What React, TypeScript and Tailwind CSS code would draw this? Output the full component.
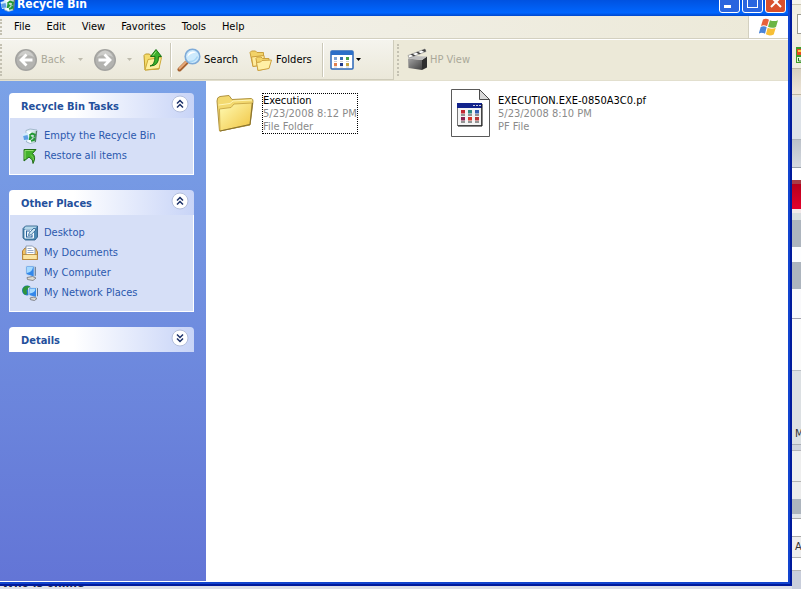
import type { ReactNode } from "react";

const MENUS = ["File", "Edit", "View", "Favorites", "Tools", "Help"];

// Slices of the browser page that shows to the right of the window
const PAGE_SLICES = [
  { className: "h-[4px] bg-[#f7f5ee]" },
  { className: "h-[10px] border-t border-[#c9c4b0] bg-[#f1eee2]" },
  { className: "h-[20px] bg-[#f3f0e6]", kind: "field" },
  { className: "h-[8px] bg-[#f1eee2]" },
  { className: "h-[26px] bg-[#efecdf]", kind: "badge" },
  { className: "h-[27px] border-y border-[#bdb6a3] bg-linear-to-b from-[#d8d1c0] to-[#efe6d9]" },
  { className: "h-[2px] bg-[#e8e4dc]" },
  { className: "h-[43px] border-b border-[#aeb4ba] bg-[#dde2e8]" },
  { className: "h-[28px] border-b border-[#9aa1aa] bg-linear-to-b from-[#bcc2ca] to-[#d5d9df]" },
  { className: "h-[12px] bg-white" },
  { className: "h-[29px] border-t-4 border-[#a83c46] bg-linear-to-b from-[#b8001c] to-[#e4002b]" },
  { className: "h-[4px] bg-[#f3e9ea]" },
  { className: "h-[7px] bg-[#d9dddf]" },
  { className: "h-[27px] bg-[#adb5be]" },
  { className: "h-[15px] bg-[#fcfdfe]" },
  { className: "h-[27px] bg-[#adb5be]" },
  { className: "h-[30px] border-b border-[#a5a5b0] bg-[#f9f9fb]" },
  { className: "h-[52px] border-b border-[#b9bec4] bg-[#fafafa]" },
  { className: "h-[52px] bg-[#dce0e3]" },
  { className: "h-[22px] border-b border-[#aaaeb4] bg-[#dce0e3]", letter: "M" },
  { className: "h-[6px] border-b border-[#b4b4ba] bg-[#d0d4dc]" },
  { className: "h-[31px] border-b border-[#b4b4b4] bg-[#eeeeee]" },
  { className: "h-[17px] bg-[#ebebeb]" },
  { className: "h-[15px] bg-[#adb5be]" },
  { className: "h-[5px] border-b border-[#aaaaaa] bg-[#e2e5e8]" },
  { className: "h-[18px] border-b border-[#aaaaaa] bg-white" },
  { className: "h-[21px] border-b border-[#b4b4b4] bg-[#eeeeee]", letter: "A" },
  { className: "h-[13px] border-b border-[#b4b4b4] bg-white" }
];

function RecycleIcon() {
  return (
    <svg viewBox="0 0 16 16" className="h-4 w-4 shrink-0">
      <path d="M4 2.5 8 1l7 1-1.5 12-5 1.5L4.5 14Z" fill="#dcebf3" stroke="#8ba6ba" strokeWidth=".7" />
      <path d="M4.5 3 10 4 9 15 5.5 13.5Z" fill="#f6fcff" />
      <path d="m10 4 4.500-1.500L13.200 14 9 15.200Z" fill="#c4dcd6" />
      <path d="M.5 6 6 4.500 7.500 12 2 13Z" fill="#d4ebfd" />
      <path d="M1.200 8 5.500 7l1 4.500-4.500.5Z" fill="#5d9ee4" />
      <path d="m7.500 7.500 2.500-2 3 1.200L12.500 9M12.500 9.500 12 12l-3 .8M7.800 12 8.200 8.800l2 1.200" fill="none" stroke="#219a33" strokeWidth="1.900" />
      <path d="M14.500 3 13.300 14" stroke="#4f7d62" strokeWidth="1.200" />
    </svg>
  );
}

function RestoreIcon() {
  return (
    <svg viewBox="0 0 16 16" className="h-4 w-4 shrink-0">
      <path d="M2 1.500h12L10.500 5.500q4 3.500.5 10Q11.500 11.500 7 9l-5 4Z" fill="#43b22d" stroke="#226c17" />
      <path d="M3 11V2.500h8.500" fill="none" stroke="#92df70" />
      <path d="M8.500 7q3.500 2 3 5" fill="none" stroke="#77cf57" />
    </svg>
  );
}

function DesktopIcon() {
  return (
    <svg viewBox="0 0 16 16" className="h-4 w-4 shrink-0">
      <path d="M1 3.500 3.500 1h12v11L13 15H3.500L1 13Z" fill="#4d88b3" stroke="#25577f" strokeWidth=".8" />
      <path d="M3.500 1.500H15L12.500 4H2Z" fill="#b4d7ea" />
      <rect x="2.500" y="4.500" width="9.500" height="9" rx="1" fill="#f5faff" />
      <path d="M8 6H4.500v6H10v-2.500" fill="none" stroke="#28619b" strokeWidth="1.100" />
      <path d="m6.500 10.500.7-2.500L12 3l2 1.800L9 9.800Z" fill="#d5eaf6" stroke="#20598c" strokeWidth=".8" />
    </svg>
  );
}

function DocumentsIcon() {
  return (
    <svg viewBox="0 0 16 16" className="h-4 w-4 shrink-0">
      <path d="M.5 6 3 3h10.500l2 4v7.500H.5Z" fill="#f2c260" stroke="#a8752a" strokeWidth=".9" />
      <path d="M4 1h6.500L13 3.500V11H4Z" fill="#fff" stroke="#788aa6" strokeWidth=".8" />
      <path d="M5.500 3.500h4M5.500 5.500h6M5.500 7.500h6" stroke="#9aacca" />
      <path d="M.7 9.500H15.300v5H.7Z" fill="#fbe5a2" stroke="#b4822f" strokeWidth=".8" />
    </svg>
  );
}

function ComputerIcon() {
  return (
    <svg viewBox="0 0 16 16" className="h-4 w-4 shrink-0">
      <path d="m11 1 3 1v8.500L12 12Z" fill="#7488a2" />
      <path d="M4 1h8.200v11L4 9.500Z" fill="#3387ea" stroke="#cbdaec" />
      <path d="M5 2h6q-.5 5-6 6Z" fill="#a5daff" />
      <path d="m5 12.500 5.500-1L14 13l-3 2.500-5.500-1Z" fill="#dddbd3" stroke="#73757b" strokeWidth=".8" />
    </svg>
  );
}

function NetworkIcon() {
  return (
    <svg viewBox="0 0 16 16" className="h-4 w-4 shrink-0">
      <circle cx="5" cy="5.500" r="5" fill="#2877cf" />
      <path d="M1 3Q4-.5 8 1.500L7 4 4.500 5 5 9 3 10Q-.5 7 1 3Z" fill="#2e953c" />
      <path d="m14 2.500 2 .8v7.500L14 12.500Z" fill="#62768f" />
      <path d="M6.500 3 14.500 2.500v10L7 10.500Z" fill="#3387ea" stroke="#d4e0ee" />
      <path d="m7.500 4 6-.5q-.5 4.500-6 5Z" fill="#a7dbff" />
      <path d="m8 13 4-1 3 1.500-2.500 2-4-.8Z" fill="#d9d8d2" stroke="#707278" strokeWidth=".8" />
    </svg>
  );
}

const TASKS = [
  { label: "Empty the Recycle Bin", icon: <RecycleIcon /> },
  { label: "Restore all items", icon: <RestoreIcon /> }
];

const PLACES = [
  { label: "Desktop", icon: <DesktopIcon /> },
  { label: "My Documents", icon: <DocumentsIcon /> },
  { label: "My Computer", icon: <ComputerIcon /> },
  { label: "My Network Places", icon: <NetworkIcon /> }
];

function ArrowCircle({ forward = false }: { forward?: boolean }) {
  return (
    <svg viewBox="0 0 24 24" className="h-6 w-6">
      <circle cx="12" cy="12" r="11" fill="#a3a3a0" />
      <circle cx="12" cy="12" r="9.500" fill="#b3b3b0" />
      <path d="M4 9q3-6.500 8-6.500T20 9Q12 5 4 9Z" fill="#cdcdca" />
      <path
        d={forward ? "M5.500 12H16M11.500 6.500 17 12l-5.500 5.500" : "M18.500 12H8M12.500 6.500 7 12l5.500 5.500"}
        fill="none"
        stroke="#fff"
        strokeWidth="2.800"
      />
    </svg>
  );
}

function UpFolderIcon() {
  return (
    <svg viewBox="0 0 22 24" className="h-6 w-[22px]">
      <path d="M2 7.500 3.500 6h4l1.500 2h8v13L3 22Z" fill="#f5dc6c" stroke="#bd9a2a" />
      <path d="m3 22 3-10.500 13.500-2L17 20.500Z" fill="#fff0a0" stroke="#cdaa3a" />
      <path d="M8 18q5-1 5-9.500H8.500L14 1.500l5.500 7h-3Q17 18 8 18Z" fill="#3db02c" stroke="#1b7516" />
      <path d="m14 3.500-3 4" stroke="#9be07c" />
    </svg>
  );
}

function SearchIcon() {
  return (
    <svg viewBox="0 0 24 24" className="h-6 w-6">
      <path d="m2.500 21.500 7-7" stroke="#a4602f" strokeWidth="4" strokeLinecap="round" />
      <path d="m2.500 20.500 6.500-6.500" stroke="#e7a878" strokeWidth="2" strokeLinecap="round" />
      <circle cx="15.500" cy="8.500" r="7.300" fill="#cdeafc" stroke="#7fabd8" strokeWidth="1.600" />
      <path d="M10.500 9q0-5 5.500-5.500 2 0 3 1Q13 5 10.500 9Z" fill="#fff" />
      <path d="M12 13.500q6 .5 8.500-5" fill="none" stroke="#a5d5f5" strokeWidth="1.500" />
    </svg>
  );
}

function FoldersIcon() {
  return (
    <svg viewBox="0 0 24 24" className="h-6 w-6">
      <path d="M1 4.500 2.500 3h4L8 4.500h6.500V16L4 18.500Z" fill="#f2d268" stroke="#c9a03e" />
      <path d="M4 18.500 2.500 9 15 7.500l1 9Z" fill="#ffeb9c" stroke="#ca9e3b" />
      <path d="M7 10.500 8.500 9H12l1.500 1.500H20V20L9 22.500Z" fill="#f4d56a" stroke="#c9a03e" />
      <path d="M9 22.500 7.500 14.500l4-.5 1.500-1.500 9.500-.5-2.500 8.500Z" fill="#fff0a5" stroke="#cea341" />
    </svg>
  );
}

function ViewsIcon() {
  return (
    <svg viewBox="0 0 24 20" className="h-5 w-6">
      <rect x="1" y="1" width="22" height="18" rx="1" fill="#fff" stroke="#2b67b8" strokeWidth="1.500" />
      <path d="M1 1h22v4H1Z" fill="#2c6fc8" />
      <path d="M4 7h3v3H4Z" fill="#7fa4d4" />
      <path d="M10 7h3v3h-3Z" fill="#3870b8" />
      <path d="M16 7h3v3h-3Z" fill="#49a043" />
      <path d="M4 13h3v3H4Z" fill="#e3804c" />
      <path d="M10 13h3v3h-3Z" fill="#203b8c" />
      <path d="M16 13h3v3h-3Z" fill="#c5a440" />
      <path d="M4 11.500h3M10 11.500h3M16 11.500h3M4 17h3M10 17h3M16 17h3" stroke="#b8b8b8" strokeWidth=".7" />
    </svg>
  );
}

function ClapperIcon() {
  return (
    <svg viewBox="0 0 22 24" className="h-6 w-[22px]">
      <defs>
        <linearGradient id="clapper" x1="0" y1="0" x2="1" y2="1">
          <stop stopColor="#a4a4a4" />
          <stop offset="1" stopColor="#3f3f3f" />
        </linearGradient>
      </defs>
      <path d="M1 10.500 15 12v10L1.500 20Z" fill="url(#clapper)" />
      <path d="m15 12 5-3.500v11L15 22Z" fill="#2f2f2f" />
      <path d="m1 10.500 4-2.500 15 .5-5 3.500Z" fill="#bdbdbd" />
      <path d="M1 7.500 18 1l1 2.500L2 10Z" fill="#fff" stroke="#777" strokeWidth=".6" />
      <path d="m3.500 6.500 3 1.700 2-.8-3-1.700ZM9 4.500l3 1.700 2-.8-3-1.700ZM14.500 2.400l3 1.500 1.500-.6L18 1Z" fill="#444" />
    </svg>
  );
}

function Caret() {
  return (
    <svg viewBox="0 0 5 3" className="h-[3px] w-[5px]">
      <path d="M0 0h5L2.500 3Z" fill="currentColor" />
    </svg>
  );
}

function WindowsFlag() {
  return (
    <svg viewBox="0 0 20 18" className="h-[18px] w-5">
      <path d="M4 1.500Q7-.2 10 1.700L8 8.300Q5 6.500 2 8Z" fill="#e8613a" />
      <path d="M11 2.200q4 1.800 8 0L17 9q-4 1.800-8-.2Z" fill="#6bb544" />
      <path d="M1.700 9Q5 7.500 7.700 9.300L6 15.800Q3 14-.2 15.500Z" fill="#4a84d8" />
      <path d="M8.700 9.800q4 1.900 8 .2l-2 6.500q-4 1.900-7.800-.2Z" fill="#f7bf35" />
    </svg>
  );
}

function FolderIcon() {
  return (
    <svg viewBox="0 0 38 38" className="h-[38px] w-[38px]">
      <defs>
        <linearGradient id="folder" x1="0" y1="0" x2="1" y2="1">
          <stop stopColor="#fffbb4" />
          <stop offset="1" stopColor="#f0c33f" />
        </linearGradient>
      </defs>
      <path d="M1 7q0-4 3-4.500l9-1 3 4 19-1q2.500.5 2 3L34 31 3.500 37Z" fill="#f3d970" stroke="#b09340" />
      <path d="M2.500 11 14 9.500 17 7l19-1" fill="none" stroke="#fff6b8" />
      <path d="M3.500 15 15 13.500l3-3.500 18-1-2 21.500L4 37Z" fill="url(#folder)" stroke="#cdac4a" />
      <path d="m4 37 30-6.500L36.500 9" fill="none" stroke="#857030" />
    </svg>
  );
}

function PrefetchIcon() {
  const dots = [
    { x: 11, y: 24, fill: "#c22a34" },
    { x: 18, y: 24, fill: "#2f8c85" },
    { x: 25, y: 24, fill: "#355fb4" },
    { x: 11, y: 31, fill: "#8a2450" },
    { x: 18, y: 31, fill: "#d33a2e" },
    { x: 25, y: 31, fill: "#b73535" }
  ];
  return (
    <svg viewBox="0 0 40 48" className="h-12 w-10">
      <path d="M1.500.5h28l10 10v37h-38Z" fill="#fff" stroke="#5a5a5a" />
      <path d="M29.500.5v10h10Z" fill="#d9d9d9" stroke="#4a4a4a" />
      <rect x="7.500" y="14.500" width="24" height="22" fill="#f4f4f4" stroke="#777" />
      <path d="M7 14h25v5H7Z" fill="#12238c" />
      <path d="M32 15v22H8" fill="none" stroke="#111" />
      <path d="M23 16.500h2M26 16.500h2M29 16.500h2" stroke="#ccd" />
      {dots.map((dot) => (
        <g key={`${dot.x}-${dot.y}`}>
          <rect x={dot.x} y={dot.y - 3} width="4" height="3.500" fill={dot.fill} />
          <path d={`M${dot.x} ${dot.y + 2}h4`} stroke="#333" />
        </g>
      ))}
    </svg>
  );
}

function Chevrons({ down = false }: { down?: boolean }) {
  return (
    <svg viewBox="0 0 18 18" className={down ? "h-[18px] w-[18px] rotate-180" : "h-[18px] w-[18px]"}>
      <circle cx="9" cy="9" r="8" fill="#fff" stroke="#b4bfdc" />
      <path d="m6 8.500 3-3 3 3M6 12.500l3-3 3 3" fill="none" stroke="#1c3168" strokeWidth="1.500" />
    </svg>
  );
}

function Panel({ title, collapsed = false, children }: { title: string; collapsed?: boolean; children?: ReactNode }) {
  return (
    <section>
      <h2>
        <button
          type="button"
          aria-expanded={!collapsed}
          className="flex h-[25px] w-full items-center justify-between rounded-t-sm bg-linear-to-r from-white from-35% to-[#c8d4f7] pr-[5px] pl-3 font-bold text-[#24509c]"
        >
          <span className="pt-0.5">{title}</span>
          <span className="pb-1">
            <Chevrons down={collapsed} />
          </span>
        </button>
      </h2>
      {children}
    </section>
  );
}

function LinkList({ items }: { items: { label: string; icon: ReactNode }[] }) {
  return (
    <ul className="border border-t-0 border-white bg-[#d6dff7] py-2 pl-3">
      {items.map((item) => (
        <li key={item.label}>
          <a href="#" className="flex h-5 items-center gap-[6px] text-[#2b59ae]">
            {item.icon}
            {item.label}
          </a>
        </li>
      ))}
    </ul>
  );
}

function Separator() {
  return <span className="h-[34px] w-0.5 border-r border-l border-r-white border-l-[#cbc8b8]" />;
}

function TitleBar() {
  const button = "flex h-5 w-[21px] items-end justify-center rounded-[3px] border border-white";
  return (
    <header className="flex h-4 items-end justify-between overflow-hidden bg-linear-to-b from-[#0052e0] via-[#0066ff] via-80% to-[#0047cc] pr-0.5 pb-[3px]">
      <div className="flex items-center gap-px">
        <RecycleIcon />
        <h1 className="text-[12px] leading-[18px] font-bold text-white">Recycle Bin</h1>
      </div>
      <div className="flex gap-0.5">
        <button type="button" aria-label="Minimize" className={`${button} bg-[#2a65df]`}>
          <span className="mr-1 mb-1 h-[3px] w-[7px] bg-white" />
        </button>
        <button type="button" aria-label="Maximize" className={`${button} bg-[#2a65df]`}>
          <span className="mb-1 h-[11px] w-[11px] border border-t-3 border-white" />
        </button>
        <button type="button" aria-label="Close" className={`${button} bg-[#d9502c]`}>
          <svg viewBox="0 0 12 12" className="mb-1 h-3 w-3">
            <path d="m1 1 10 10M11 1 1 11" stroke="#fff" strokeWidth="2" />
          </svg>
        </button>
      </div>
    </header>
  );
}

function MenuBar() {
  return (
    <nav className="flex h-[23px] items-stretch justify-between border-b border-[#d3d0c0] bg-linear-to-r from-[#f4f3ee] to-[#ece9d8]">
      <div className="flex items-center">
        <span className="h-4 border-l-2 border-dotted border-[#c4c1b2]" />
        <div className="flex gap-4 pl-3">
          {MENUS.map((menu) => (
            <button key={menu} type="button">
              {menu}
            </button>
          ))}
        </div>
      </div>
      <div className="flex w-10 items-center justify-center border-l border-[#d3d0c0] bg-white">
        <WindowsFlag />
      </div>
    </nav>
  );
}

function Toolbar() {
  return (
    <div className="flex h-[42px] border-t border-b border-t-white border-b-[#e2dfce] bg-[#ece9d8]">
      <div className="flex w-[394px] items-center border-r border-b border-[#cfccbb] bg-linear-to-b from-[#f5f4ee] to-[#ebe8d9]">
        <span className="h-8 border-l-2 border-dotted border-[#c4c1b2]" />
        <button type="button" className="flex w-[66px] items-center gap-[3px] pl-3 text-[#aaa899]">
          <ArrowCircle />
          Back
        </button>
        <button type="button" aria-label="Back history" className="flex w-[25px] justify-center text-[#bebbad]">
          <Caret />
        </button>
        <button type="button" aria-label="Forward">
          <ArrowCircle forward />
        </button>
        <button type="button" aria-label="Forward history" className="flex w-[25px] justify-center text-[#bebbad]">
          <Caret />
        </button>
        <button type="button" aria-label="Up" className="w-7">
          <UpFolderIcon />
        </button>
        <Separator />
        <button type="button" className="flex w-[77px] items-center gap-[3px] pl-[5px]">
          <SearchIcon />
          Search
        </button>
        <button type="button" className="flex w-[73px] items-center gap-[3px]">
          <FoldersIcon />
          Folders
        </button>
        <Separator />
        <button type="button" aria-label="Views" className="flex items-center gap-0.5 pl-[6px]">
          <ViewsIcon />
          <Caret />
        </button>
      </div>
      <div className="flex items-center pl-[3px]">
        <span className="h-8 border-l-2 border-dotted border-[#c4c1b2]" />
        <button type="button" className="flex items-center gap-px pl-2 text-[#aaa899]">
          <ClapperIcon />
          HP View
        </button>
      </div>
    </div>
  );
}

function FileTile({ icon, name, date, type, focused = false }: { icon: ReactNode; name: string; date: string; type: string; focused?: boolean }) {
  return (
    <button type="button" className="flex h-12 w-[235px] items-center gap-2 text-left leading-[13px]">
      <span className="flex w-10 shrink-0 justify-center">{icon}</span>
      <span className={`flex flex-col whitespace-nowrap text-[#8a8a8a] ${focused ? "outline outline-dotted outline-black" : ""}`}>
        <span className="text-black">{name}</span>
        <span>{date}</span>
        <span>{type}</span>
      </span>
    </button>
  );
}

function PageBehind() {
  return (
    <aside className="w-[9px] shrink-0 overflow-hidden bg-[#c9cedb]">
      {PAGE_SLICES.map((slice, index) => (
        <div key={index} className={`flex items-center justify-end overflow-hidden ${slice.className}`}>
          {slice.letter && <span className="w-[6px] text-[#333]">{slice.letter}</span>}
          {slice.kind === "field" && <span className="h-full w-1 border border-r-0 border-[#9a9a90] bg-white" />}
          {slice.kind === "badge" && (
            <svg viewBox="0 0 5 16" className="h-4 w-[5px]">
              <path d="M0 0h5v16H0Z" fill="#3f9c2b" />
              <path d="M1 2h4v6H1Z" fill="#e64b1c" />
              <path d="M2 3h3v2H2Z" fill="#ffce48" />
              <path d="M1 10h4v5H1Z" fill="#e8f5dd" />
              <path d="M2.500 11v3H5" fill="none" stroke="#267b20" />
            </svg>
          )}
        </div>
      ))}
    </aside>
  );
}

export default function App() {
  return (
    <div className="flex h-screen overflow-hidden bg-[#dcdfe8] font-['Tahoma','DejaVu_Sans_Condensed','DejaVu_Sans',sans-serif] text-[11px] leading-[14px] text-black">
      <div className="flex min-w-0 flex-1 flex-col">
        <div className="flex min-h-0 flex-1 flex-col border-r-2 border-b-2 border-[#001a9c]">
          <div className="flex min-h-0 flex-1 flex-col border-r-2 border-b-2 border-[#1244cf] bg-white pb-px">
            <TitleBar />
            <MenuBar />
            <Toolbar />
            <div className="flex min-h-0 flex-1">
              <aside className="flex w-[206px] shrink-0 flex-col gap-[15px] bg-linear-to-b from-[#7ba2e7] to-[#6375d6] pt-3 pr-3 pl-[9px]">
                <Panel title="Recycle Bin Tasks">
                  <LinkList items={TASKS} />
                </Panel>
                <Panel title="Other Places">
                  <LinkList items={PLACES} />
                </Panel>
                <Panel title="Details" collapsed />
              </aside>
              <main className="flex flex-1 flex-wrap content-start pt-2 pl-[9px]">
                <FileTile icon={<FolderIcon />} name="Execution" date="5/23/2008 8:12 PM" type="File Folder" focused />
                <FileTile icon={<PrefetchIcon />} name="EXECUTION.EXE-0850A3C0.pf" date="5/23/2008 8:10 PM" type="PF File" />
              </main>
            </div>
          </div>
        </div>
        <footer className="flex h-[3px] items-end overflow-hidden pl-0.5">
          <p className="text-[12px] leading-3 font-bold text-[#1f2a4c]">Who is online</p>
        </footer>
      </div>
      <PageBehind />
    </div>
  );
}
